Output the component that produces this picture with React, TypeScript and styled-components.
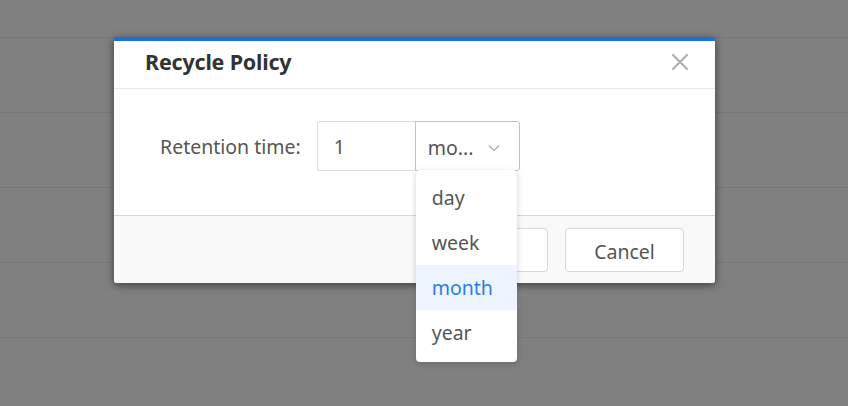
import React, { useState } from "react";
import styled, { createGlobalStyle } from "styled-components";

const GlobalStyle = createGlobalStyle`
  html, body {
    margin: 0;
    padding: 0;
    height: 100%;
  }
  body {
    font-family: "Noto Sans", "Open Sans", sans-serif;
    background: #808080;
  }
`;

const Backdrop = styled.div`
  width: 848px;
  height: 406px;
  box-sizing: border-box;
  padding: 37px 0 0 114px;
  background-color: #808080;
  background-image: repeating-linear-gradient(
    to bottom,
    transparent 0,
    transparent 37px,
    #777777 37px,
    #777777 38px,
    transparent 38px,
    transparent 75px
  );
`;

const Modal = styled.div`
  width: 601px;
  background: #ffffff;
  border-top: 4px solid #1a6fdc;
  border-radius: 3px;
  box-shadow: 0 2px 8px rgba(0, 0, 0, 0.55);
  display: flex;
  flex-direction: column;
`;

const Header = styled.div`
  height: 47px;
  border-bottom: 1px solid #e8e8e8;
  display: flex;
  align-items: center;
  justify-content: space-between;
  padding: 0 24px 0 31px;
`;

const Title = styled.h2`
  margin: -6px 0 0;
  font-size: 21.5px;
  font-weight: 700;
  color: #333333;
  letter-spacing: -0.2px;
`;

const CloseButton = styled.button`
  border: none;
  background: transparent;
  padding: 0;
  width: 22px;
  height: 22px;
  display: flex;
  align-items: center;
  justify-content: center;
  cursor: pointer;
  margin-top: -6px;
`;

const Body = styled.div`
  height: 127px;
  box-sizing: border-box;
  padding: 32px 0 0 46px;
  border-bottom: 1px solid #d6d6d6;
`;

const FieldRow = styled.div`
  display: flex;
  align-items: center;
`;

const Label = styled.span`
  font-size: 19.5px;
  color: #555555;
  margin-right: 16px;
`;

const NumberBox = styled.div`
  width: 98px;
  height: 50px;
  box-sizing: border-box;
  border: 1px solid #d9dde3;
  border-right: none;
  border-radius: 3px 0 0 3px;
  display: flex;
  align-items: center;
  padding-left: 16px;
  font-size: 19.5px;
  color: #555555;
`;

const SelectWrap = styled.div`
  position: relative;
`;

const SelectBox = styled.div`
  width: 105px;
  height: 50px;
  box-sizing: border-box;
  border: 1px solid #a9c3ec;
  border-radius: 0 3px 3px 0;
  display: flex;
  align-items: center;
  justify-content: space-between;
  padding: 3px 19px 0 12px;
  font-size: 19.5px;
  color: #555555;
`;

const Menu = styled.ul`
  position: absolute;
  top: 49px;
  left: 1px;
  width: 101px;
  margin: 0;
  padding: 5px 0 7px;
  list-style: none;
  background: #ffffff;
  border-radius: 4px;
  box-shadow: 0 2px 6px rgba(0, 0, 0, 0.18);
  z-index: 10;
`;

const MenuItem = styled.li<{ $active: boolean }>`
  height: 45px;
  display: flex;
  align-items: center;
  padding-left: 16px;
  font-size: 19.5px;
  color: ${({ $active }) => ($active ? "#2f7be6" : "#555555")};
  background: ${({ $active }) => ($active ? "#eef4fe" : "transparent")};
  cursor: pointer;
`;

const Footer = styled.div`
  height: 67px;
  box-sizing: border-box;
  padding: 12px 31px 0 0;
  background: #f9f9f9;
  display: flex;
  align-items: flex-start;
  justify-content: flex-end;
  gap: 17px;
  border-radius: 0 0 3px 3px;
`;

const Button = styled.button<{ $primary?: boolean }>`
  width: 119px;
  height: 44px;
  box-sizing: border-box;
  border: 1px solid #d4d8de;
  border-radius: 4px;
  background: #ffffff;
  font-family: inherit;
  font-size: 19.5px;
  color: #555555;
  padding-top: 3px;
  cursor: pointer;
`;

const units = ["day", "week", "month", "year"];

const App = () => {
  const [unit, setUnit] = useState("month");

  return (
    <>
      <GlobalStyle />
      <Backdrop>
        <Modal>
          <Header>
            <Title>Recycle Policy</Title>
            <CloseButton aria-label="close">
              <svg width="18" height="18" viewBox="0 0 18 18">
                <path
                  d="M2 2 L16 16 M16 2 L2 16"
                  stroke="#b0b0b0"
                  strokeWidth="2.2"
                  strokeLinecap="round"
                />
              </svg>
            </CloseButton>
          </Header>
          <Body>
            <FieldRow>
              <Label>Retention time:</Label>
              <NumberBox>1</NumberBox>
              <SelectWrap>
                <SelectBox>
                  <span>mo...</span>
                  <svg width="12" height="8" viewBox="0 0 12 8">
                    <path
                      d="M1 1.5 L6 6.5 L11 1.5"
                      fill="none"
                      stroke="#a8a8a8"
                      strokeWidth="1.2"
                    />
                  </svg>
                </SelectBox>
                <Menu>
                  {units.map((u) => (
                    <MenuItem key={u} $active={u === unit} onClick={() => setUnit(u)}>
                      {u}
                    </MenuItem>
                  ))}
                </Menu>
              </SelectWrap>
            </FieldRow>
          </Body>
          <Footer>
            <Button $primary>OK</Button>
            <Button>Cancel</Button>
          </Footer>
        </Modal>
      </Backdrop>
    </>
  );
};

export default App;
